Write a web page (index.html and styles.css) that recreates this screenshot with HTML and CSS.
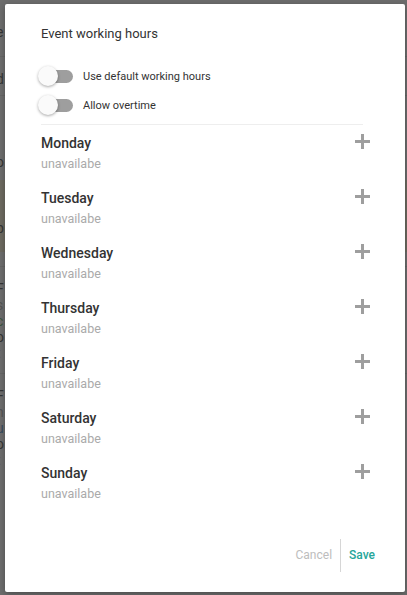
FILE: index.html
```html
<!DOCTYPE html>
<html lang="en">
<head>
    <meta charset="UTF-8">
    <title>Event working hours</title>
    <link rel="stylesheet" href="styles.css">
</head>
<body>
    <!-- page behind the overlay -->
    <div class="page">
        <div class="page-row">e</div>
        <div class="page-row page-line">d</div>
        <div class="page-row">o</div>
        <div class="page-warn">
            <div>I</div>
            <div>b</div>
        </div>
        <div class="page-block">
            <div>F</div>
            <div class="muted">s</div>
            <div class="green">c</div>
            <div>o</div>
            <div class="red">t</div>
        </div>
        <div class="page-block">
            <div>F</div>
            <div class="muted">h</div>
            <div class="blue">u</div>
            <div>o</div>
            <div class="red">t</div>
        </div>
    </div>

    <div class="overlay">
        <div class="dialog">
            <h2 class="dialog-title">Event working hours</h2>

            <div class="toggles">
                <label class="toggle">
                    <span class="toggle-track"><span class="toggle-thumb"></span></span>
                    <span class="toggle-label">Use default working hours</span>
                </label>
                <label class="toggle">
                    <span class="toggle-track"><span class="toggle-thumb"></span></span>
                    <span class="toggle-label">Allow overtime</span>
                </label>
            </div>

            <ul class="days">
                <li class="day">
                    <div class="day-text">
                        <div class="day-name">Monday</div>
                        <div class="day-status">unavailabe</div>
                    </div>
                    <button class="add-btn" type="button"><svg width="15" height="15" viewBox="0 0 15 15"><path d="M7.5 0v15M0 7.5h15" stroke="currentColor" stroke-width="3"/></svg></button>
                </li>
                <li class="day">
                    <div class="day-text">
                        <div class="day-name">Tuesday</div>
                        <div class="day-status">unavailabe</div>
                    </div>
                    <button class="add-btn" type="button"><svg width="15" height="15" viewBox="0 0 15 15"><path d="M7.5 0v15M0 7.5h15" stroke="currentColor" stroke-width="3"/></svg></button>
                </li>
                <li class="day">
                    <div class="day-text">
                        <div class="day-name">Wednesday</div>
                        <div class="day-status">unavailabe</div>
                    </div>
                    <button class="add-btn" type="button"><svg width="15" height="15" viewBox="0 0 15 15"><path d="M7.5 0v15M0 7.5h15" stroke="currentColor" stroke-width="3"/></svg></button>
                </li>
                <li class="day">
                    <div class="day-text">
                        <div class="day-name">Thursday</div>
                        <div class="day-status">unavailabe</div>
                    </div>
                    <button class="add-btn" type="button"><svg width="15" height="15" viewBox="0 0 15 15"><path d="M7.5 0v15M0 7.5h15" stroke="currentColor" stroke-width="3"/></svg></button>
                </li>
                <li class="day">
                    <div class="day-text">
                        <div class="day-name">Friday</div>
                        <div class="day-status">unavailabe</div>
                    </div>
                    <button class="add-btn" type="button"><svg width="15" height="15" viewBox="0 0 15 15"><path d="M7.5 0v15M0 7.5h15" stroke="currentColor" stroke-width="3"/></svg></button>
                </li>
                <li class="day">
                    <div class="day-text">
                        <div class="day-name">Saturday</div>
                        <div class="day-status">unavailabe</div>
                    </div>
                    <button class="add-btn" type="button"><svg width="15" height="15" viewBox="0 0 15 15"><path d="M7.5 0v15M0 7.5h15" stroke="currentColor" stroke-width="3"/></svg></button>
                </li>
                <li class="day">
                    <div class="day-text">
                        <div class="day-name">Sunday</div>
                        <div class="day-status">unavailabe</div>
                    </div>
                    <button class="add-btn" type="button"><svg width="15" height="15" viewBox="0 0 15 15"><path d="M7.5 0v15M0 7.5h15" stroke="currentColor" stroke-width="3"/></svg></button>
                </li>
            </ul>

            <div class="dialog-actions">
                <button class="btn btn-cancel" type="button">Cancel</button>
                <button class="btn btn-save" type="button">Save</button>
            </div>
        </div>
    </div>
</body>
</html>
```

FILE: styles.css
```css
* {
    box-sizing: border-box;
    margin: 0;
    padding: 0;
}

body {
    width: 407px;
    height: 595px;
    overflow: hidden;
    font-family: Roboto, "Liberation Sans", sans-serif;
    background: #ffffff;
    position: relative;
}

/* underlying page */
.page {
    padding-top: 20px;
    font-size: 14px;
    line-height: 16px;
    color: #222;
    margin-left: -4px;
}

.page-row {
    padding: 4px 0;
}

.page-line {
    border-top: 1px solid #ddd;
    margin-top: 12px;
    padding: 14px 0 8px;
    border-bottom: 1px solid #ddd;
    margin-bottom: 54px;
}

.page-warn {
    background: #fff3cc;
    padding: 18px 0 16px;
    margin: 6px 0 14px;
    display: flex;
    flex-direction: column;
    gap: 6px;
}

.page-block {
    border-top: 1px solid #ddd;
    padding: 14px 0 12px;
    display: flex;
    flex-direction: column;
}

.muted { color: #999; }
.green { color: #3a9a3a; }
.red { color: #c0392b; }
.blue { color: #2b7bc0; }

/* dialog overlay */
.overlay {
    position: absolute;
    top: 0;
    left: 0;
    right: 0;
    bottom: 0;
    background: rgba(60, 60, 60, 0.75);
    padding: 4px 2px 3px 5px;
}

.dialog {
    width: 400px;
    height: 588px;
    background: #fff;
    border-radius: 2px;
    box-shadow: 0 2px 6px rgba(0, 0, 0, 0.3);
    padding: 22px 36px 0 36px;
    display: flex;
    flex-direction: column;
}

.dialog-title {
    font-size: 13px;
    font-weight: 400;
    color: #333;
    line-height: 16px;
    margin-bottom: 24px;
}

.toggles {
    display: flex;
    flex-direction: column;
    gap: 9px;
    padding-bottom: 9px;
    border-bottom: 1px solid #eeeeee;
    margin-right: 6px;
}

.toggle {
    display: flex;
    align-items: center;
    height: 20px;
}

.toggle-track {
    position: relative;
    width: 33px;
    height: 13px;
    border-radius: 7px;
    background: #9e9e9e;
    margin-left: -1px;
    margin-right: 10px;
}

.toggle-thumb {
    position: absolute;
    top: -4px;
    left: -2px;
    width: 20px;
    height: 20px;
    border-radius: 50%;
    background: #fafafa;
    box-shadow: 0 1px 3px rgba(0, 0, 0, 0.35);
}

.toggle-label {
    font-size: 11px;
    color: #333;
}

.days {
    list-style: none;
    padding-top: 10px;
}

.day {
    display: flex;
    justify-content: space-between;
    align-items: flex-start;
    height: 55px;
}

.day-name {
    font-size: 14px;
    font-weight: 500;
    color: #333;
    line-height: 17px;
}

.day-status {
    font-size: 12.5px;
    color: #aaa;
    line-height: 16px;
    margin-top: 4px;
}

.add-btn {
    border: none;
    background: none;
    color: #9e9e9e;
    display: flex;
    margin-top: -1px;
    margin-right: -1px;
}

.dialog-actions {
    margin-top: auto;
    margin-bottom: 20px;
    display: flex;
    justify-content: flex-end;
    align-items: center;
    margin-right: -14px;
}

.btn {
    border: none;
    background: none;
    font-family: inherit;
    font-size: 12px;
    padding: 0 8px;
    line-height: 33px;
}

.btn-cancel {
    color: #bdbdbd;
    border-right: 1px solid #d6d6d6;
}

.btn-save {
    color: #26a69a;
    font-weight: 500;
}
```
